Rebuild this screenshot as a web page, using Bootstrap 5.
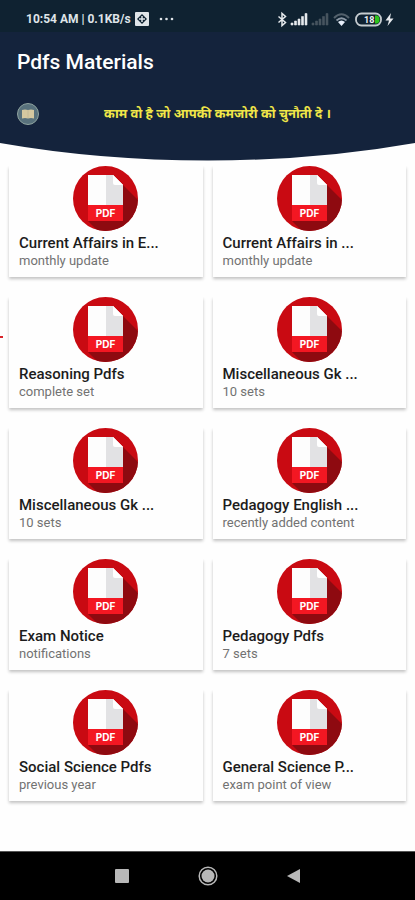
<!DOCTYPE html>
<html lang="en">
<head>
<meta charset="utf-8">
<meta name="viewport" content="width=device-width, initial-scale=1">
<title>Pdfs Materials</title>
<link rel="stylesheet" href="https://cdn.jsdelivr.net/npm/bootstrap@5.3.0/dist/css/bootstrap.min.css">
<style>
body{font-family:Roboto,"Noto Sans",sans-serif;background:#fefefe;color:#1c1c1c}
.status{background:#0f2231;color:#dfe4e8;height:32px;padding:6px 20px 0 26px;font-size:12px;font-weight:700;line-height:16px}
.hero{background:#14233c}
.hero-title{font-size:21px;line-height:28px;font-weight:500;padding:16px 17px 0}
.quote-row{padding:26px 20px 0 16px;height:67px}
.quote{color:#f0e648;font-family:"Noto Sans Devanagari","Noto Sans",sans-serif;font-size:13px;line-height:26px;font-weight:700}
.curve{height:18px;width:100%}
.tiles{--bs-gutter-x:10px;--bs-gutter-y:20px;padding:5px 9px 0}
.tile{height:111px;background:#fefefe;color:#1c1c1c;box-shadow:0 2px 3px rgba(0,0,0,.24);clip-path:inset(0 -4px -6px -4px)}
.tile-name{font-size:15px;line-height:18px;font-weight:500;padding:3px 10px 0}
.tile-note{font-size:13px;line-height:16px;padding:1px 10px 0;color:#727272}
.edge-mark{left:0;top:336px;width:3px;height:2px;background:#d8232a}
.sysnav{height:49px;background:#000;border-top:1px solid #555;gap:56px}
.sysnav button{width:30px;height:30px}
</style>
</head>
<body>
<div class="d-flex flex-column min-vh-100 position-relative">
<header>
<div class="status d-flex justify-content-between">
<div class="d-flex align-items-center"><span>10:54 AM | 0.1KB/s</span>
<svg class="ms-1" width="14" height="14" viewBox="0 0 14 14"><rect width="14" height="14" rx="1" fill="#dfe4e8"/><path d="M7 2L12 7L7 12L2 7Z" fill="#0f2231"/><path d="M7 4V10M4 7H10" stroke="#dfe4e8" stroke-width="1.500"/></svg>
<svg class="ms-2" width="18" height="14" viewBox="0 0 18 14" fill="#dfe4e8"><circle cx="4" cy="7" r="1.300"/><circle cx="9.500" cy="7" r="1.300"/><circle cx="15" cy="7" r="1.300"/></svg></div>
<svg width="120" height="26" viewBox="275 6 120 26" fill="none" aria-label="System status">
<path d="M278.500 16.500L285.500 22.500L282 25.500V13.500L285.500 16.500L278.500 22.500" stroke="#e6eaed" stroke-width="1.500"/>
<path d="M291 25V23H293V25ZM294.500 25V21H296.500V25ZM298 25V19H300V25ZM301.500 25V16.500H303.500V25ZM305 25V13.500H307V25Z" fill="#e6eaed" stroke="#e6eaed" stroke-width=".6"/>
<path d="M312 25V23H314V25ZM315.500 25V21H317.500V25ZM319 25V19H321V25ZM322.500 25V16.500H324.500V25ZM326 25V13.500H328V25Z" fill="#46545f" stroke="#46545f" stroke-width=".6"/>
<path d="M334 18Q341.500 10.500 349 18" stroke="#53616c" stroke-width="2"/><path d="M336.500 20.500Q341.500 16 346.500 20.500" stroke="#8b98a5" stroke-width="1.700"/><path d="M338 22Q341.500 19 345 22L341.500 26Z" fill="#e7effa"/>
<rect x="356" y="13.500" width="25" height="12" rx="5.500" stroke="#c5ccd0" stroke-width="1.800"/>
<path d="M375 15.500H377Q379.500 16 379.500 19.500T377 23.500H375Z" fill="#2cc51c"/>
<text x="364" y="23" font-size="9" font-weight="700" fill="#f1f3f4">18</text>
<path d="M391 13L385.500 20.500H389L387.500 26L393.500 18.500H390Z" fill="#e6eaed"/>
</svg>
</div>
<div class="hero">
<h1 class="hero-title text-white m-0">Pdfs Materials</h1>
<div class="quote-row d-flex align-items-start">
<svg class="flex-shrink-0" width="24" height="24" viewBox="0 0 24 24"><circle cx="12" cy="12" r="10.500" fill="#58717c" stroke="#8fa39f"/><path d="M6 8Q9 7 12 8Q15 7 18 8V16.500Q15 15.500 12 16.500Q9 15.500 6 16.500Z" fill="#d5c8a0"/><path d="M12 8V16" stroke="#c4ba98"/></svg>
<p class="quote text-center flex-grow-1 m-0" lang="hi">काम वो है जो आपकी कमजोरी को चुनौती दे ।</p>
</div>
</div>
<svg class="curve d-block" viewBox="0 0 415 18" preserveAspectRatio="none"><path d="M0 0Q100 17.500 208 17.500T415 0Z" fill="#14233c"/></svg>
</header>
<main class="flex-grow-1">
<div class="tiles row m-0" id="tiles"></div>
</main>
<div class="edge-mark position-absolute"></div>
<nav class="sysnav d-flex justify-content-center align-items-center" aria-label="System">
<button class="btn p-0 d-flex align-items-center justify-content-center" aria-label="Recent apps"><svg width="14" height="14"><rect width="14" height="14" rx="1" fill="#b8b8b8"/></svg></button>
<button class="btn p-0 d-flex align-items-center justify-content-center" aria-label="Home"><svg width="20" height="20"><circle cx="10" cy="10" r="8.800" fill="none" stroke="#b8b8b8" stroke-width="1.500"/><circle cx="10" cy="10" r="6.500" fill="#b8b8b8"/></svg></button>
<button class="btn p-0 d-flex align-items-center justify-content-center" aria-label="Back"><svg width="14" height="14"><path d="M13 0V14L0 7Z" fill="#b8b8b8"/></svg></button>
</nav>
</div>
<script src="https://cdn.jsdelivr.net/npm/bootstrap@5.3.0/dist/js/bootstrap.bundle.min.js"></script>
<script>
const pdfIcon=`<svg class="d-block mx-auto rounded-circle" width="65" height="65" viewBox="0 0 65 65" aria-hidden="true">
<rect width="65" height="65" fill="#c90a12"/>
<path d="M50 19L65 34V65H25L15 55H50Z" fill="#8e0a10"/>
<path d="M15 9H40L50 19V40H15Z" fill="#fdfdfd"/>
<path d="M33 9H40L50 19V40H33Z" fill="#e2e2e4"/>
<path d="M40 9L50 19H42Q40 19 40 17Z" fill="#fff"/>
<rect x="15" y="39" width="35" height="16" fill="#f31722"/>
<text x="32.500" y="51" text-anchor="middle" font-family="Inter,sans-serif" font-weight="700" font-size="10" fill="#fff">PDF</text>
</svg>`;
const items=[["Current Affairs in E...","monthly update"],["Current Affairs in ...","monthly update"],["Reasoning Pdfs","complete set"],["Miscellaneous Gk ...","10 sets"],["Miscellaneous Gk ...","10 sets"],["Pedagogy English ...","recently added content"],["Exam Notice","notifications"],["Pedagogy Pdfs","7 sets"],["Social Science Pdfs","previous year"],["General Science P...","exam point of view"]];
document.getElementById("tiles").innerHTML=items.map(([n,s],i)=>`<div class="col-6 ${i<2?"mt-0":""} ${i%2?"pe-0":"ps-0"}"><a href="#" class="tile d-block text-decoration-none">${pdfIcon}<div class="tile-name text-truncate">${n}</div><div class="tile-note text-truncate">${s}</div></a></div>`).join("");
</script>
</body>
</html>
